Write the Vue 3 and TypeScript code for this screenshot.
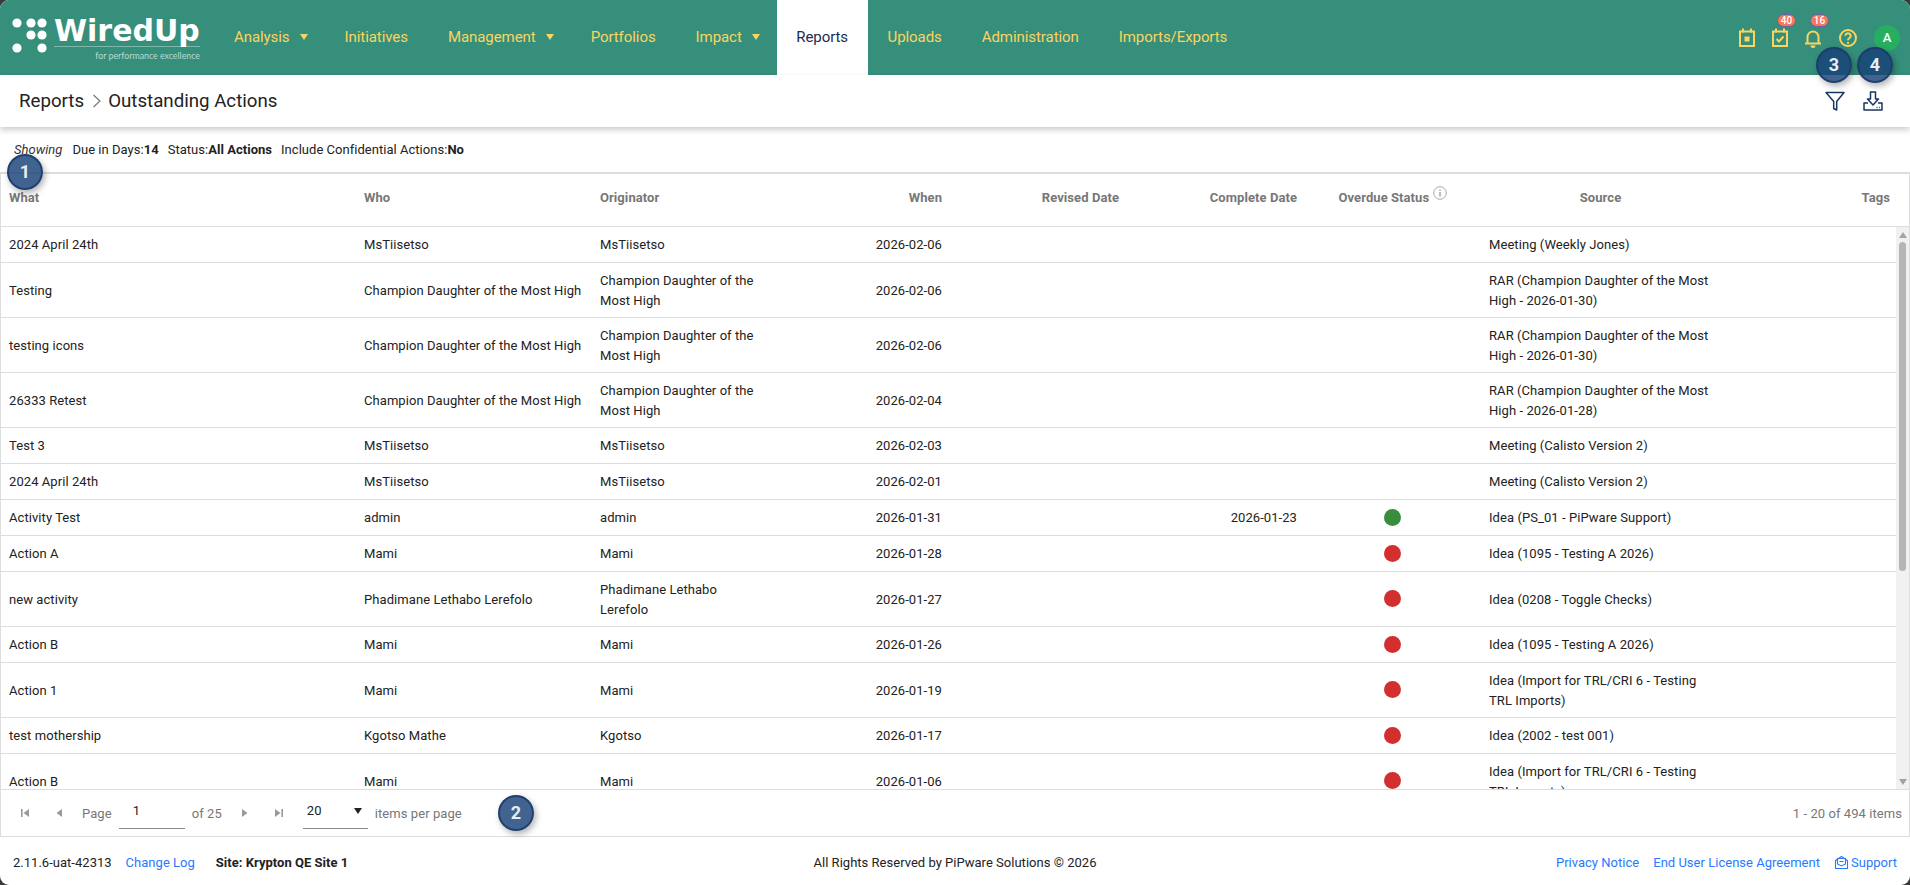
<script setup lang="ts">
interface Row {
  what: string
  who: string
  originator: string
  when: string
  complete?: string
  status?: 'green' | 'red'
  source: string
  two?: boolean
}

interface NavItem {
  label: string
  caret?: boolean
  active?: boolean
}

const nav: NavItem[] = [
  { label: 'Analysis', caret: true },
  { label: 'Initiatives' },
  { label: 'Management', caret: true },
  { label: 'Portfolios' },
  { label: 'Impact', caret: true },
  { label: 'Reports', active: true },
  { label: 'Uploads' },
  { label: 'Administration' },
  { label: 'Imports/Exports' }
]

const champion = 'Champion Daughter of the Most High'
const trl = 'Idea (Import for TRL/CRI 6 - Testing TRL Imports)'

const rows: Row[] = [
  { what: '2024 April 24th', who: 'MsTiisetso', originator: 'MsTiisetso', when: '2026-02-06', source: 'Meeting (Weekly Jones)' },
  { what: 'Testing', who: champion, originator: champion, when: '2026-02-06', source: 'RAR (Champion Daughter of the Most High - 2026-01-30)', two: true },
  { what: 'testing icons', who: champion, originator: champion, when: '2026-02-06', source: 'RAR (Champion Daughter of the Most High - 2026-01-30)', two: true },
  { what: '26333 Retest', who: champion, originator: champion, when: '2026-02-04', source: 'RAR (Champion Daughter of the Most High - 2026-01-28)', two: true },
  { what: 'Test 3', who: 'MsTiisetso', originator: 'MsTiisetso', when: '2026-02-03', source: 'Meeting (Calisto Version 2)' },
  { what: '2024 April 24th', who: 'MsTiisetso', originator: 'MsTiisetso', when: '2026-02-01', source: 'Meeting (Calisto Version 2)' },
  { what: 'Activity Test', who: 'admin', originator: 'admin', when: '2026-01-31', complete: '2026-01-23', status: 'green', source: 'Idea (PS_01 - PiPware Support)' },
  { what: 'Action A', who: 'Mami', originator: 'Mami', when: '2026-01-28', status: 'red', source: 'Idea (1095 - Testing A 2026)' },
  { what: 'new activity', who: 'Phadimane Lethabo Lerefolo', originator: 'Phadimane Lethabo Lerefolo', when: '2026-01-27', status: 'red', source: 'Idea (0208 - Toggle Checks)', two: true },
  { what: 'Action B', who: 'Mami', originator: 'Mami', when: '2026-01-26', status: 'red', source: 'Idea (1095 - Testing A 2026)' },
  { what: 'Action 1', who: 'Mami', originator: 'Mami', when: '2026-01-19', status: 'red', source: trl, two: true },
  { what: 'test mothership', who: 'Kgotso Mathe', originator: 'Kgotso', when: '2026-01-17', status: 'red', source: 'Idea (2002 - test 001)' },
  { what: 'Action B', who: 'Mami', originator: 'Mami', when: '2026-01-06', status: 'red', source: trl, two: true }
]

const colWidths: number[] = [355, 236, 178, 180, 177, 178, 176, 239]
</script>

<template>
  <div class="app">
    <header class="nav">
      <div class="logo">
        <svg class="logo-dots" width="40" height="40" viewBox="0 0 40 40">
          <circle cx="7" cy="8" r="4.6" />
          <circle cx="21" cy="8" r="4.6" />
          <circle cx="32" cy="8" r="4.6" />
          <circle cx="21" cy="20" r="4.6" />
          <circle cx="32" cy="20" r="4.6" />
          <circle cx="7" cy="33" r="4.6" />
          <circle cx="32" cy="33" r="4.6" />
        </svg>
        <div class="logo-text">
          <div class="logo-name">WiredUp</div>
          <div class="logo-tag">for performance excellence</div>
        </div>
      </div>
      <nav class="menu">
        <a v-for="item in nav" :key="item.label" class="menu-item" :class="{ active: item.active, 'has-caret': item.caret }">
          {{ item.label }}<i v-if="item.caret" class="caret"></i>
        </a>
      </nav>
      <div class="tools">
        <span class="tool">
          <svg width="22" height="22" viewBox="0 0 22 22" fill="none" stroke="currentColor" stroke-width="2">
            <rect x="4" y="4.5" width="14" height="14.5" />
            <path d="M7 1.5v4M15 1.5v4" />
            <rect x="8.5" y="9.5" width="5" height="5" fill="currentColor" stroke="none" />
          </svg>
        </span>
        <span class="tool">
          <svg width="22" height="22" viewBox="0 0 22 22" fill="none" stroke="currentColor" stroke-width="2">
            <rect x="4" y="4.5" width="14" height="14.5" />
            <path d="M7 1.5v4M15 1.5v4" />
            <path d="M7.5 12l2.5 2.5 4.5-5" />
          </svg>
          <b class="badge">40</b>
        </span>
        <span class="tool">
          <svg width="22" height="22" viewBox="0 0 22 22" fill="none" stroke="currentColor" stroke-width="2">
            <path d="M5.5 16V10a5.5 5.500 0 0 1 11 0v6" />
            <path d="M3 16.500h16" />
            <path d="M8.500 18.500a2.500 2.500 0 0 0 5 0z" fill="currentColor" stroke="none" />
          </svg>
          <b class="badge">16</b>
        </span>
        <span class="tool help">
          <svg width="22" height="22" viewBox="0 0 22 22" fill="none" stroke="currentColor" stroke-width="2">
            <circle cx="11" cy="11" r="8" />
            <path d="M8.300 8.800a2.700 2.600 0 1 1 4.200 2.200c-1 .6-1.500 1.100-1.500 2.200" />
            <path d="M11 15v1.800" />
          </svg>
        </span>
        <span class="avatar">A</span>
      </div>
    </header>

    <section class="titlebar">
      <h1 class="title">Reports<svg class="crumb" width="12" height="18" viewBox="0 0 12 18" fill="none" stroke="#777" stroke-width="1.2"><path d="M2.500 3l6.500 6-6.500 6" /></svg>Outstanding Actions</h1>
      <div class="actions">
        <svg width="22" height="24" viewBox="0 0 22 24" fill="none" stroke="#17375e" stroke-width="1.500" stroke-linejoin="round">
          <path d="M2 3.500h18l-7.300 9v8.500l-3-1.500v-7z" />
        </svg>
        <svg width="22" height="24" viewBox="0 0 22 24" fill="none" stroke="#17375e" stroke-width="1.500" stroke-linejoin="round">
          <path d="M8.500 3h5v7h3l-5.500 6-5.500-6h3z" />
          <path d="M6 14H2v7h18v-7h-4" />
          <path d="M14.500 18.500h1M17 18.500h.8" />
        </svg>
      </div>
    </section>

    <div class="showing">
      <em>Showing</em>
      <span>Due in Days:<b>14</b></span>
      <span>Status:<b>All Actions</b></span>
      <span>Include Confidential Actions:<b>No</b></span>
    </div>

    <div class="grid">
      <div class="grid-head">
        <table>
          <colgroup>
            <col v-for="(w, i) in colWidths" :key="i" :style="{ width: w + 'px' }" />
            <col />
          </colgroup>
          <thead>
            <tr>
              <th>What</th>
              <th>Who</th>
              <th>Originator</th>
              <th class="r">When</th>
              <th class="r">Revised Date</th>
              <th class="r">Complete Date</th>
              <th class="c">
                Overdue Status
                <svg class="info" width="14" height="14" viewBox="0 0 14 14" fill="none" stroke="#aaa" stroke-width="1">
                  <circle cx="7" cy="7" r="6.300" />
                  <path d="M7 6v4.500" stroke-width="1.600" />
                  <path d="M7 3.200v1.500" stroke-width="1.600" />
                </svg>
              </th>
              <th class="c">Source</th>
              <th class="r">Tags</th>
            </tr>
          </thead>
        </table>
      </div>
      <div class="grid-body">
        <table>
          <colgroup>
            <col v-for="(w, i) in colWidths" :key="i" :style="{ width: w + 'px' }" />
            <col />
          </colgroup>
          <tbody>
            <tr v-for="(row, i) in rows" :key="i" :class="{ two: row.two }">
              <td>{{ row.what }}</td>
              <td>{{ row.who }}</td>
              <td>{{ row.originator }}</td>
              <td class="r">{{ row.when }}</td>
              <td class="r"></td>
              <td class="r">{{ row.complete }}</td>
              <td class="c"><i v-if="row.status" class="dot" :class="row.status"></i></td>
              <td>{{ row.source }}</td>
              <td></td>
            </tr>
          </tbody>
        </table>
        <div class="scrollbar">
          <i class="arrow up"></i>
          <i class="thumb"></i>
          <i class="arrow down"></i>
        </div>
      </div>
    </div>

    <div class="pager">
      <svg class="pg" width="12" height="12" viewBox="0 0 12 12"><path d="M2 2h1.600v8H2zM10 2v8L4.500 6z" /></svg>
      <svg class="pg second" width="12" height="12" viewBox="0 0 12 12"><path d="M9 2v8L3.500 6z" /></svg>
      <span class="pg-label page">Page</span>
      <span class="pg-input">1</span>
      <span class="pg-label">of 25</span>
      <svg class="pg next" width="12" height="12" viewBox="0 0 12 12"><path d="M3 2v8l5.500-4z" /></svg>
      <svg class="pg last" width="12" height="12" viewBox="0 0 12 12"><path d="M2 2v8l5.500-4zM8.400 2H10v8H8.400z" /></svg>
      <span class="pg-select">20<i></i></span>
      <span class="pg-label">items per page</span>
      <span class="pg-count">1 - 20 of 494 items</span>
    </div>

    <footer class="footer">
      <div class="foot-left">
        <span>2.11.6-uat-42313</span>
        <a>Change Log</a>
        <b>Site: Krypton QE Site 1</b>
      </div>
      <div class="foot-center">All Rights Reserved by PiPware Solutions © 2026</div>
      <div class="foot-right">
        <a>Privacy Notice</a>
        <a>End User License Agreement</a>
        <a class="support">
          <svg width="15" height="15" viewBox="0 0 15 15" fill="none" stroke="#2979ff" stroke-width="1.100">
            <path d="M1.500 5.500L7.500 1.500l6 4v8h-12z" />
            <path d="M3.500 3.500h8v5.500l-4 2-4-2z" />
            <path d="M5.500 6.500h4" />
          </svg>
          Support
        </a>
      </div>
    </footer>

    <span class="callout one">1</span>
    <span class="callout two-c">2</span>
    <span class="callout three">3</span>
    <span class="callout four">4</span>
  </div>
</template>

<style>
html,
body {
  margin: 0;
  background: #3a3a3a;
  overflow: hidden;
}
</style>

<style scoped>
.app {
  position: relative;
  height: 885px;
  width: 1910px;
  display: flex;
  flex-direction: column;
  background: #fff;
  border-radius: 9px;
  overflow: hidden;
  font-family: Roboto, "Liberation Sans", sans-serif;
  font-size: 13px;
  letter-spacing: 0.07px;
  color: #222;
}

.nav {
  flex: none;
  height: 75px;
  display: flex;
  background: #358f7b;
}

.logo {
  width: 214px;
  flex: none;
  display: flex;
  color: #fff;
  letter-spacing: 0;
}

.logo-dots {
  fill: #fff;
  margin: 15px 0 0 10px;
  flex: none;
}

.logo-text {
  margin: 15px 0 0 4px;
  width: 146px;
}

.logo-name {
  font-family: "DejaVu Sans", sans-serif;
  font-weight: 700;
  font-size: 30px;
  line-height: 31px;
  white-space: nowrap;
  border-bottom: 1px solid #7db8aa;
}

.logo-tag {
  font-family: Lato, sans-serif;
  font-size: 8.800px;
  line-height: 17px;
  text-align: right;
  color: #b9dad2;
  white-space: nowrap;
}

.menu {
  display: flex;
}

.menu-item {
  display: flex;
  align-items: center;
  height: 75px;
  box-sizing: border-box;
  padding: 0 20px 1px;
  font-size: 15px;
  letter-spacing: -0.07px;
  color: #fbd45f;
  white-space: nowrap;
}

.menu-item.has-caret {
  padding-right: 17px;
}

.menu-item.active {
  background: #fff;
  color: #1d2b4f;
  padding: 0 19.500px 1px;
}

.caret {
  width: 0;
  height: 0;
  margin-left: 10px;
  border-left: 4px solid transparent;
  border-right: 4px solid transparent;
  border-top: 6px solid #fbd45f;
}

.tools {
  margin-left: auto;
  display: flex;
  align-items: center;
  gap: 11px;
  padding: 0 10px 0 0;
  color: #fbd45f;
}

.tool {
  position: relative;
  display: flex;
  width: 22px;
  height: 22px;
}

.help {
  margin-left: 2px;
  margin-right: 4px;
}

.badge {
  position: absolute;
  top: -13px;
  left: 8px;
  width: 19px;
  height: 13px;
  border-radius: 7px;
  background: #f4795b;
  border: 1px solid #6a5fa5;
  box-sizing: border-box;
  color: #fff;
  font-size: 10px;
  font-weight: 500;
  letter-spacing: 0;
  line-height: 11px;
  text-align: center;
}

.avatar {
  width: 26px;
  height: 26px;
  border-radius: 50%;
  background: #27ae60;
  color: #fff;
  font-size: 13px;
  font-weight: 500;
  line-height: 26px;
  text-align: center;
}

.titlebar {
  position: relative;
  flex: none;
  height: 52px;
  display: flex;
  align-items: center;
  justify-content: space-between;
  padding: 0 26px 0 19px;
  background: #fff;
  box-shadow: 0 3px 6px rgba(0, 0, 0, 0.2);
}

.title {
  margin: 0;
  display: flex;
  align-items: center;
  font-size: 18.700px;
  font-weight: 400;
  letter-spacing: 0;
  color: #222;
}

.crumb {
  margin: 0 5px 0 7px;
}

.actions {
  display: flex;
  gap: 16px;
}

.showing {
  flex: none;
  height: 45px;
  display: flex;
  align-items: center;
  gap: 9px;
  padding: 0 14px;
  box-sizing: border-box;
  letter-spacing: 0.03px;
}

.showing em {
  color: #333;
  margin-right: 1px;
}

.showing b {
  font-weight: 700;
}

.grid {
  flex: 1;
  min-height: 0;
  display: flex;
  flex-direction: column;
  border: 1px solid #ddd;
  border-top-width: 2px;
  border-bottom: 0;
}

.grid-head {
  flex: none;
  padding-right: 11px;
  border-bottom: 1px solid #ddd;
}

.grid-body {
  position: relative;
  flex: 1;
  min-height: 0;
  overflow: hidden;
}

.scrollbar {
  position: absolute;
  top: 0;
  right: 0;
  bottom: 0;
  width: 13px;
  display: flex;
  flex-direction: column;
  align-items: center;
  background: #f1f1f1;
}

.arrow {
  flex: none;
  width: 0;
  height: 0;
  border-left: 4px solid transparent;
  border-right: 4px solid transparent;
}

.arrow.up {
  margin-top: 5px;
  border-bottom: 6px solid #a3a3a3;
}

.arrow.down {
  margin-top: auto;
  margin-bottom: 4px;
  border-top: 6px solid #a3a3a3;
}

.thumb {
  flex: none;
  width: 7px;
  height: 329px;
  margin-top: 4px;
  border-radius: 4px;
  background: #b5b5b5;
}

table {
  width: 100%;
  table-layout: fixed;
  border-collapse: separate;
  border-spacing: 0;
}

th {
  height: 52px;
  padding: 0 8px 5px;
  box-sizing: border-box;
  font-size: 13px;
  font-weight: 700;
  color: #777;
  text-align: left;
  white-space: nowrap;
}

td {
  height: 36px;
  padding: 1px 8px 0;
  box-sizing: border-box;
  line-height: 19.500px;
  border-bottom: 1px solid #ddd;
  vertical-align: middle;
}

tr.two td {
  height: 55px;
}

.r {
  text-align: right;
}

.c {
  text-align: center;
}

.info {
  position: relative;
  top: -5px;
  vertical-align: middle;
  margin-left: 1px;
}

.dot {
  display: block;
  width: 17px;
  height: 17px;
  border-radius: 50%;
  margin: -2px auto 0;
  transform: translateX(-1px);
}

.dot.green {
  background: #388e3c;
}

.dot.red {
  background: #d32f2f;
}

.pager {
  flex: none;
  height: 48px;
  box-sizing: border-box;
  display: flex;
  align-items: center;
  padding: 0 7px 0 18px;
  border: 1px solid #ddd;
  color: #777;
}

.pg {
  fill: #999;
  flex: none;
}

.second {
  margin-left: 22px;
}

.next {
  margin-left: 17px;
}

.last {
  margin-left: 22px;
}

.pg-label.page {
  margin-left: 17px;
}

.pg-input {
  width: 66px;
  height: 32px;
  margin: 0 7px;
  padding-left: 14px;
  box-sizing: border-box;
  border-bottom: 1px solid #888;
  color: #222;
  line-height: 28px;
}

.pg-select {
  position: relative;
  width: 65px;
  height: 32px;
  margin: 0 7px 0 18px;
  padding-left: 4px;
  box-sizing: border-box;
  border-bottom: 1px solid #888;
  color: #222;
  line-height: 28px;
}

.pg-select i {
  position: absolute;
  right: 6px;
  top: 11px;
  border-left: 4.500px solid transparent;
  border-right: 4.500px solid transparent;
  border-top: 6px solid #222;
}

.pg-count {
  margin-left: auto;
}

.footer {
  flex: none;
  height: 48px;
  display: grid;
  grid-template-columns: 1fr auto 1fr;
  align-items: center;
  padding: 2px 13px 0;
  box-sizing: border-box;
  letter-spacing: 0.02px;
}

.foot-left {
  display: flex;
  gap: 14px;
}

.foot-left b {
  margin-left: 7px;
}

.foot-center {
  color: #222;
}

.foot-right {
  display: flex;
  justify-content: flex-end;
  gap: 14px;
}

a {
  cursor: pointer;
}

.footer a {
  color: #2979ff;
}

.support {
  display: flex;
  align-items: center;
  gap: 2px;
}

.callout {
  position: absolute;
  width: 36px;
  height: 36px;
  box-sizing: border-box;
  border-radius: 50%;
  background: rgba(22, 65, 120, 0.82);
  border: 2px solid rgba(30, 60, 105, 0.9);
  box-shadow: 2px 3px 6px rgba(0, 0, 0, 0.3);
  color: #e8edf3;
  font-size: 18px;
  font-weight: 700;
  line-height: 32px;
  text-align: center;
}

.one {
  left: 7px;
  top: 154px;
}

.two-c {
  left: 498px;
  top: 795px;
}

.three {
  left: 1816px;
  top: 47px;
}

.four {
  left: 1857px;
  top: 47px;
}
</style>
